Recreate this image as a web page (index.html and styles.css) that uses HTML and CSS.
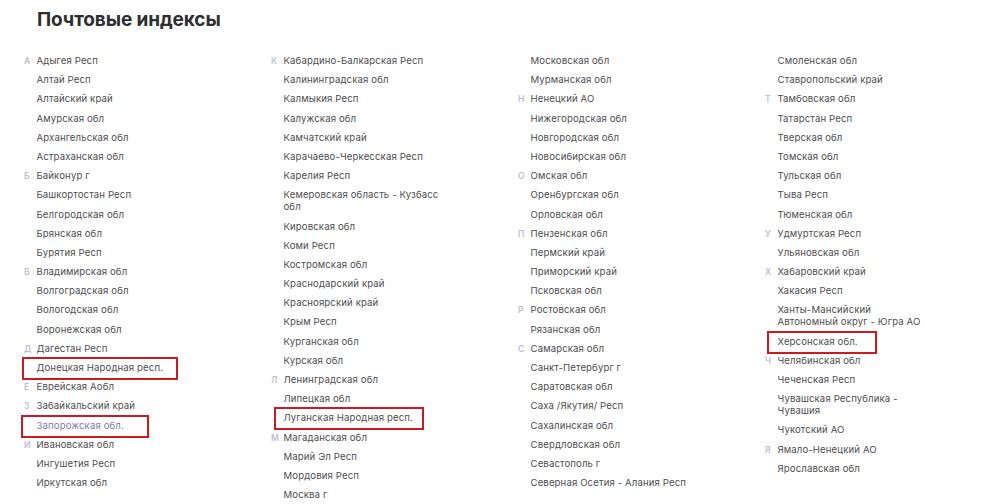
FILE: index.html
```html
<!DOCTYPE html>
<html lang="ru">
<head>
<meta charset="utf-8">
<title>Почтовые индексы</title>
<link rel="stylesheet" href="styles.css">
</head>
<body>
<main class="page">
  <h1 class="title">Почтовые индексы</h1>
  <div class="columns">
    <ul class="col">
      <li class="item"><span class="letter">А</span><a class="name">Адыгея Респ</a></li>
      <li class="item"><span class="letter"></span><a class="name">Алтай Респ</a></li>
      <li class="item"><span class="letter"></span><a class="name">Алтайский край</a></li>
      <li class="item"><span class="letter"></span><a class="name">Амурская обл</a></li>
      <li class="item"><span class="letter"></span><a class="name">Архангельская обл</a></li>
      <li class="item"><span class="letter"></span><a class="name">Астраханская обл</a></li>
      <li class="item"><span class="letter">Б</span><a class="name">Байконур г</a></li>
      <li class="item"><span class="letter"></span><a class="name">Башкортостан Респ</a></li>
      <li class="item"><span class="letter"></span><a class="name">Белгородская обл</a></li>
      <li class="item"><span class="letter"></span><a class="name">Брянская обл</a></li>
      <li class="item"><span class="letter"></span><a class="name">Бурятия Респ</a></li>
      <li class="item"><span class="letter">В</span><a class="name">Владимирская обл</a></li>
      <li class="item"><span class="letter"></span><a class="name">Волгоградская обл</a></li>
      <li class="item"><span class="letter"></span><a class="name">Вологодская обл</a></li>
      <li class="item"><span class="letter"></span><a class="name">Воронежская обл</a></li>
      <li class="item"><span class="letter">Д</span><a class="name">Дагестан Респ</a></li>
      <li class="item"><span class="letter"></span><a class="name marked mark-dnr">Донецкая Народная респ.</a></li>
      <li class="item"><span class="letter">Е</span><a class="name">Еврейская Аобл</a></li>
      <li class="item"><span class="letter">З</span><a class="name">Забайкальский край</a></li>
      <li class="item"><span class="letter"></span><a class="name visited marked mark-zap">Запорожская обл.</a></li>
      <li class="item"><span class="letter">И</span><a class="name">Ивановская обл</a></li>
      <li class="item"><span class="letter"></span><a class="name">Ингушетия Респ</a></li>
      <li class="item"><span class="letter"></span><a class="name">Иркутская обл</a></li>
    </ul>
    <ul class="col">
      <li class="item"><span class="letter">К</span><a class="name">Кабардино-Балкарская Респ</a></li>
      <li class="item"><span class="letter"></span><a class="name">Калининградская обл</a></li>
      <li class="item"><span class="letter"></span><a class="name">Калмыкия Респ</a></li>
      <li class="item"><span class="letter"></span><a class="name">Калужская обл</a></li>
      <li class="item"><span class="letter"></span><a class="name">Камчатский край</a></li>
      <li class="item"><span class="letter"></span><a class="name">Карачаево-Черкесская Респ</a></li>
      <li class="item"><span class="letter"></span><a class="name">Карелия Респ</a></li>
      <li class="item"><span class="letter"></span><a class="name">Кемеровская область - Кузбасс<br>обл</a></li>
      <li class="item"><span class="letter"></span><a class="name">Кировская обл</a></li>
      <li class="item"><span class="letter"></span><a class="name">Коми Респ</a></li>
      <li class="item"><span class="letter"></span><a class="name">Костромская обл</a></li>
      <li class="item"><span class="letter"></span><a class="name">Краснодарский край</a></li>
      <li class="item"><span class="letter"></span><a class="name">Красноярский край</a></li>
      <li class="item"><span class="letter"></span><a class="name">Крым Респ</a></li>
      <li class="item"><span class="letter"></span><a class="name">Курганская обл</a></li>
      <li class="item"><span class="letter"></span><a class="name">Курская обл</a></li>
      <li class="item"><span class="letter">Л</span><a class="name">Ленинградская обл</a></li>
      <li class="item"><span class="letter"></span><a class="name">Липецкая обл</a></li>
      <li class="item"><span class="letter"></span><a class="name marked mark-lnr">Луганская Народная респ.</a></li>
      <li class="item"><span class="letter">М</span><a class="name">Магаданская обл</a></li>
      <li class="item"><span class="letter"></span><a class="name">Марий Эл Респ</a></li>
      <li class="item"><span class="letter"></span><a class="name">Мордовия Респ</a></li>
      <li class="item"><span class="letter"></span><a class="name">Москва г</a></li>
    </ul>
    <ul class="col">
      <li class="item"><span class="letter"></span><a class="name">Московская обл</a></li>
      <li class="item"><span class="letter"></span><a class="name">Мурманская обл</a></li>
      <li class="item"><span class="letter">Н</span><a class="name">Ненецкий АО</a></li>
      <li class="item"><span class="letter"></span><a class="name">Нижегородская обл</a></li>
      <li class="item"><span class="letter"></span><a class="name">Новгородская обл</a></li>
      <li class="item"><span class="letter"></span><a class="name">Новосибирская обл</a></li>
      <li class="item"><span class="letter">О</span><a class="name">Омская обл</a></li>
      <li class="item"><span class="letter"></span><a class="name">Оренбургская обл</a></li>
      <li class="item"><span class="letter"></span><a class="name">Орловская обл</a></li>
      <li class="item"><span class="letter">П</span><a class="name">Пензенская обл</a></li>
      <li class="item"><span class="letter"></span><a class="name">Пермский край</a></li>
      <li class="item"><span class="letter"></span><a class="name">Приморский край</a></li>
      <li class="item"><span class="letter"></span><a class="name">Псковская обл</a></li>
      <li class="item"><span class="letter">Р</span><a class="name">Ростовская обл</a></li>
      <li class="item"><span class="letter"></span><a class="name">Рязанская обл</a></li>
      <li class="item"><span class="letter">С</span><a class="name">Самарская обл</a></li>
      <li class="item"><span class="letter"></span><a class="name">Санкт-Петербург г</a></li>
      <li class="item"><span class="letter"></span><a class="name">Саратовская обл</a></li>
      <li class="item"><span class="letter"></span><a class="name">Саха /Якутия/ Респ</a></li>
      <li class="item"><span class="letter"></span><a class="name">Сахалинская обл</a></li>
      <li class="item"><span class="letter"></span><a class="name">Свердловская обл</a></li>
      <li class="item"><span class="letter"></span><a class="name">Севастополь г</a></li>
      <li class="item"><span class="letter"></span><a class="name">Северная Осетия - Алания Респ</a></li>
    </ul>
    <ul class="col">
      <li class="item"><span class="letter"></span><a class="name">Смоленская обл</a></li>
      <li class="item"><span class="letter"></span><a class="name">Ставропольский край</a></li>
      <li class="item"><span class="letter">Т</span><a class="name">Тамбовская обл</a></li>
      <li class="item"><span class="letter"></span><a class="name">Татарстан Респ</a></li>
      <li class="item"><span class="letter"></span><a class="name">Тверская обл</a></li>
      <li class="item"><span class="letter"></span><a class="name">Томская обл</a></li>
      <li class="item"><span class="letter"></span><a class="name">Тульская обл</a></li>
      <li class="item"><span class="letter"></span><a class="name">Тыва Респ</a></li>
      <li class="item"><span class="letter"></span><a class="name">Тюменская обл</a></li>
      <li class="item"><span class="letter">У</span><a class="name">Удмуртская Респ</a></li>
      <li class="item"><span class="letter"></span><a class="name">Ульяновская обл</a></li>
      <li class="item"><span class="letter">Х</span><a class="name">Хабаровский край</a></li>
      <li class="item"><span class="letter"></span><a class="name">Хакасия Респ</a></li>
      <li class="item"><span class="letter"></span><a class="name">Ханты-Мансийский<br>Автономный округ - Югра АО</a></li>
      <li class="item"><span class="letter"></span><a class="name marked mark-kher">Херсонская обл.</a></li>
      <li class="item"><span class="letter">Ч</span><a class="name">Челябинская обл</a></li>
      <li class="item"><span class="letter"></span><a class="name">Чеченская Респ</a></li>
      <li class="item"><span class="letter"></span><a class="name">Чувашская Республика -<br>Чувашия</a></li>
      <li class="item"><span class="letter"></span><a class="name">Чукотский АО</a></li>
      <li class="item"><span class="letter">Я</span><a class="name">Ямало-Ненецкий АО</a></li>
      <li class="item"><span class="letter"></span><a class="name">Ярославская обл</a></li>
    </ul>
  </div>
</main>
</body>
</html>
```

FILE: styles.css
```css
* { box-sizing: border-box; }

html, body {
  margin: 0;
  padding: 0;
  background: #ffffff;
}

body {
  font-family: Inter, "Noto Sans", "DejaVu Sans", sans-serif;
  color: #4d4d4f;
  overflow: hidden;
}

.page {
  padding: 8px 0 0 24px;
}

.title {
  margin: 0 0 0 13px;
  font-size: 19px;
  line-height: 24px;
  font-weight: 700;
  color: #2e2e30;
  letter-spacing: -0.1px;
}

.columns {
  display: grid;
  grid-template-columns: repeat(4, 247px);
  margin-top: 23px;
}

.col {
  list-style: none;
  margin: 0;
  padding: 0;
  display: flex;
  flex-direction: column;
  gap: 7.2px;
}

.item {
  display: flex;
  align-items: flex-start;
  font-size: 9.6px;
  line-height: 12px;
}

.letter {
  flex: 0 0 12.5px;
  font-size: 8.5px;
  font-weight: 600;
  color: #bdbdd8;
}

.name {
  white-space: nowrap;
  color: #4d4d4f;
  text-decoration: none;
  letter-spacing: 0.12px;
  position: relative;
}

.name.visited {
  color: #8377a8;
}

.marked::after {
  content: "";
  position: absolute;
  border: 2px solid #cc1a22;
  top: -5px;
  bottom: -6px;
  left: -15px;
  right: -14px;
}

.mark-dnr::after { left: -15px; right: -15px; }
.mark-zap::after { left: -16px; right: -25px; }
.mark-lnr::after { left: -10px; right: -11px; }
.mark-kher::after { left: -11px; right: -19px; }
```
